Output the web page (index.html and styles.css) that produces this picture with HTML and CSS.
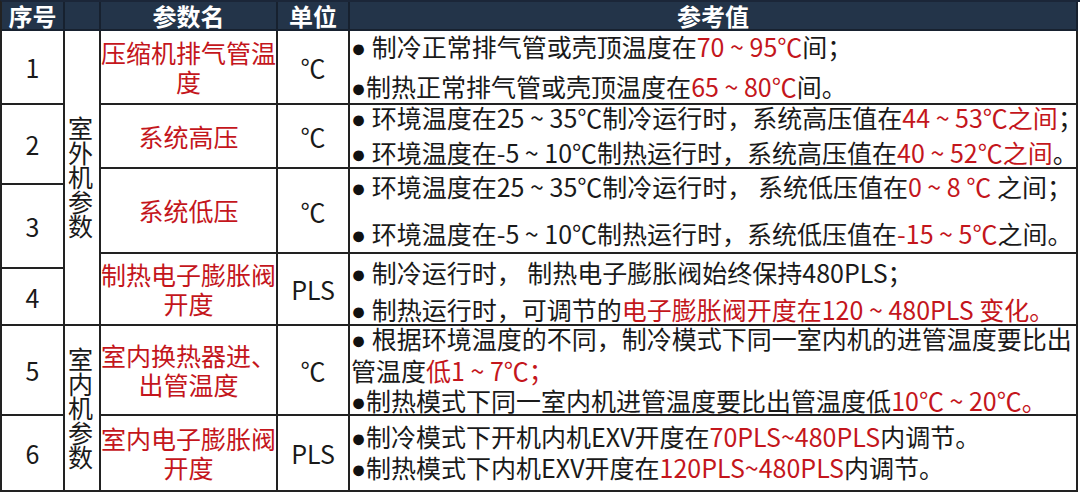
FILE: index.html
```html
<!DOCTYPE html>
<html lang="zh-CN">
<head>
<meta charset="utf-8">
<title>参数表</title>
<link rel="stylesheet" href="styles.css">
</head>
<body>
<div class="table">
  <div class="cell head c1">序号</div>
  <div class="cell head c2"></div>
  <div class="cell head c3">参数名</div>
  <div class="cell head c4">单位</div>
  <div class="cell head c5">参考值</div>

  <div class="cell num c1 n1">1</div>
  <div class="cell num c1 n2">2</div>
  <div class="cell num c1 n3">3</div>
  <div class="cell num c1 n4">4</div>
  <div class="cell num c1 n5">5</div>
  <div class="cell num c1 n6">6</div>

  <div class="cell group c2 g1"><span class="vtext">室外机参数</span></div>
  <div class="cell group c2 g2"><span class="vtext">室内机参数</span></div>

  <div class="cell name c3 r1">压缩机排气管温<br>度</div>
  <div class="cell unit c4 r1">℃</div>
  <div class="cell value c5 r1 lh1">
    <div><span class="dot">●</span> 制冷正常排气管或壳顶温度在<span class="red">70 ~ 95℃</span>间；</div>
    <div><span class="dot">●</span>制热正常排气管或壳顶温度在<span class="red">65 ~ 80℃</span>间。</div>
  </div>

  <div class="cell name c3 r2">系统高压</div>
  <div class="cell unit c4 r2">℃</div>
  <div class="cell value c5 r2 lh2">
    <div><span class="dot">●</span> 环境温度在25 ~ 35℃制冷运行时，系统高压值在<span class="red">44 ~ 53℃之间</span>；</div>
    <div><span class="dot">●</span> 环境温度在-5 ~ 10℃制热运行时，系统高压值在<span class="red">40 ~ 52℃之间</span>。</div>
  </div>

  <div class="cell name c3 r3">系统低压</div>
  <div class="cell unit c4 r3">℃</div>
  <div class="cell value c5 r3 lh3">
    <div><span class="dot">●</span> 环境温度在25 ~ 35℃制冷运行时， 系统低压值在<span class="red">0 ~ 8 ℃</span> 之间；</div>
    <div><span class="dot">●</span> 环境温度在-5 ~ 10℃制热运行时，系统低压值在<span class="red">-15 ~ 5℃</span>之间。</div>
  </div>

  <div class="cell name c3 r4">制热电子膨胀阀<br>开度</div>
  <div class="cell unit c4 r4">PLS</div>
  <div class="cell value c5 r4 lh4">
    <div><span class="dot">●</span> 制冷运行时， 制热电子膨胀阀始终保持480PLS；</div>
    <div><span class="dot">●</span> 制热运行时，可调节的<span class="red">电子膨胀阀开度在120 ~ 480PLS 变化。</span></div>
  </div>

  <div class="cell name c3 r5">室内换热器进、<br>出管温度</div>
  <div class="cell unit c4 r5">℃</div>
  <div class="cell value c5 r5 lh5">
    <div><span class="dot">●</span> 根据环境温度的不同，制冷模式下同一室内机的进管温度要比出</div>
    <div>管温度<span class="red">低1 ~ 7℃；</span></div>
    <div><span class="dot">●</span>制热模式下同一室内机进管温度要比出管温度低<span class="red">10℃ ~ 20℃。</span></div>
  </div>

  <div class="cell name c3 r6">室内电子膨胀阀<br>开度</div>
  <div class="cell unit c4 r6">PLS</div>
  <div class="cell value c5 r6 lh6">
    <div><span class="dot">●</span>制冷模式下开机内机EXV开度在<span class="red">70PLS~480PLS</span>内调节。</div>
    <div><span class="dot">●</span>制热模式下内机EXV开度在<span class="red">120PLS~480PLS</span>内调节。</div>
  </div>
</div>
</body>
</html>
```

FILE: styles.css
```css
html, body {
  margin: 0;
  padding: 0;
  background: #ffffff;
}

body {
  font-family: "Noto Sans CJK SC", "Noto Sans", sans-serif;
  color: #1a1a1a;
  font-size: 25px;
}

.table {
  display: grid;
  grid-template-columns: 63px 36px 177px 72px 728px;
  grid-template-rows: 29px 74px 64px 16px 69px 15px 57px 90px 76px;
  width: 1078px;
  border-left: 2px solid #222222;
  border-top: 2px solid #1b2638;
  overflow: hidden;
}

.cell {
  box-sizing: border-box;
  border-right: 2px solid #222222;
  border-bottom: 2px solid #222222;
  display: flex;
  align-items: center;
  justify-content: center;
  text-align: center;
  overflow: hidden;
  white-space: nowrap;
}

.head {
  grid-row: 1;
  background: #233449;
  color: #ffffff;
  font-weight: 700;
  font-size: 24px;
  line-height: 27px;
  border-right-color: #17212f;
  border-bottom-color: #17212f;
}

.c1 { grid-column: 1; }
.c2 { grid-column: 2; }
.c3 { grid-column: 3; }
.c4 { grid-column: 4; }
.c5 { grid-column: 5; }

.n1 { grid-row: 2; }
.n2 { grid-row: 3 / 5; }
.n3 { grid-row: 5 / 7; }
.n4 { grid-row: 7; }
.n5 { grid-row: 8; }
.n6 { grid-row: 9; }

.g1 { grid-row: 2 / 8; }
.g2 { grid-row: 8 / 10; }

.r1 { grid-row: 2; }
.r2 { grid-row: 3; }
.r3 { grid-row: 4 / 6; }
.r4 { grid-row: 6 / 8; }
.r5 { grid-row: 8; }
.r6 { grid-row: 9; }

.num {
  font-size: 25px;
}

.group {
  white-space: normal;
}

.vtext {
  writing-mode: vertical-rl;
  text-orientation: upright;
  font-size: 25px;
  line-height: 25px;
  letter-spacing: -0.5px;
  margin-right: 4px;
}

.name {
  color: #c4161c;
  font-size: 25px;
  line-height: 29px;
}

.unit {
  font-size: 25px;
}

.value {
  flex-direction: column;
  align-items: stretch;
  justify-content: center;
  text-align: left;
  padding-left: 1px;
  font-size: 25px;
}

.lh1 { line-height: 38px; }
.lh2 { line-height: 33px; }
.lh3 { line-height: 45px; }
.lh4 { line-height: 35px; padding-top: 6px; }
.lh5 { line-height: 30px; }
.lh6 { line-height: 29px; }

.red {
  color: #c4161c;
}

.dot {
  font-family: "Liberation Sans", sans-serif;
  color: #111111;
}
```
